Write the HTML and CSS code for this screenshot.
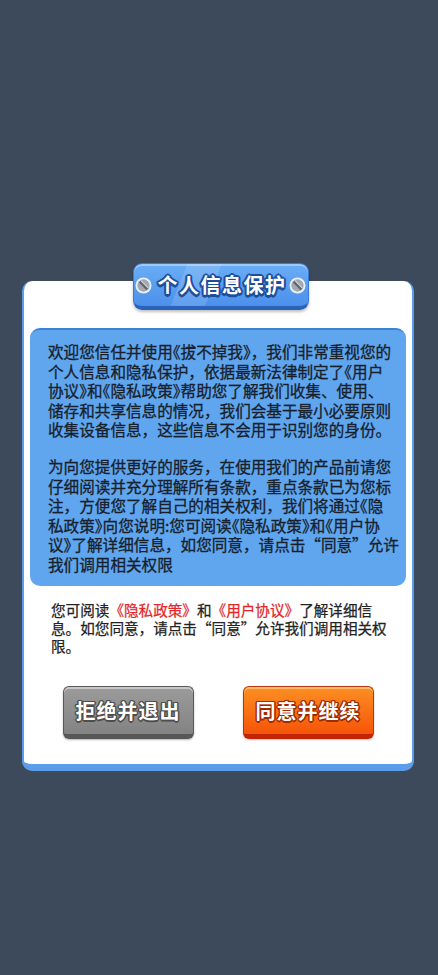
FILE: index.html
```html
<!DOCTYPE html>
<html lang="zh-CN">
<head>
<meta charset="utf-8">
<title>个人信息保护</title>
<link rel="stylesheet" href="styles.css">
</head>
<body>
<div class="page">
  <div class="dialog">
    <div class="tab-row">
      <div class="tab">
        <svg class="screw" width="17" height="17" viewBox="0 0 16 16"><circle cx="8" cy="8" r="7.5" fill="#e9f0fa"/><circle cx="8" cy="8" r="5.8" fill="#a3a9b3"/><path d="M4.4 4.4 L11.6 11.6" stroke="#60656d" stroke-width="2.2"/><path d="M5.6 3.4 L12.4 10.2" stroke="#cfd4dc" stroke-width="1"/></svg>
        <span class="tab-title">个人信息保护</span>
        <svg class="screw" width="17" height="17" viewBox="0 0 16 16"><circle cx="8" cy="8" r="7.5" fill="#e9f0fa"/><circle cx="8" cy="8" r="5.8" fill="#a3a9b3"/><path d="M4.4 4.4 L11.6 11.6" stroke="#60656d" stroke-width="2.2"/><path d="M5.6 3.4 L12.4 10.2" stroke="#cfd4dc" stroke-width="1"/></svg>
      </div>
    </div>
    <div class="card">
      <div class="notice">
        <p>欢迎您信任并使用<span class="q">《</span>拔不掉我<span class="q">》</span>，我们非常重视您的<br>个人信息和隐私保护，依据最新法律制定了<span class="q">《</span>用户<br>协议<span class="q">》</span>和<span class="q">《</span>隐私政策<span class="q">》</span>帮助您了解我们收集、使用、<br>储存和共享信息的情况，我们会基于最小必要原则<br>收集设备信息，这些信息不会用于识别您的身份。</p>
        <p>为向您提供更好的服务，在使用我们的产品前请您<br>仔细阅读并充分理解所有条款，重点条款已为您标<br>注，方便您了解自己的相关权利，我们将通过<span class="q">《</span>隐<br>私政策<span class="q">》</span>向您说明:您可阅读<span class="q">《</span>隐私政策<span class="q">》</span>和<span class="q">《</span>用户协<br>议<span class="q">》</span>了解详细信息，如您同意，请点击“同意”允许<br>我们调用相关权限</p>
      </div>
      <p class="hint">您可阅读<span class="link">《隐私政策》</span>和<span class="link">《用户协议》</span>了解详细信<br>息。如您同意，请点击“同意”允许我们调用相关权<br>限。</p>
      <div class="actions">
        <button class="btn btn-grey">拒绝并退出</button>
        <button class="btn btn-orange">同意并继续</button>
      </div>
    </div>
  </div>
</div>
</body>
</html>
```

FILE: styles.css
```css
html, body {
  margin: 0;
  padding: 0;
}

body {
  background: #3d4a5c;
  font-family: "Noto Sans CJK SC", "Noto Sans", sans-serif;
}

.page {
  min-height: 975px;
  box-sizing: border-box;
  padding-top: 263px;
}

.dialog {
  width: 392px;
  margin-left: 22px;
}

.tab-row {
  display: flex;
  justify-content: center;
  padding-left: 5px;
  margin-bottom: -29px;
  position: relative;
  z-index: 1;
}

.tab {
  width: 176px;
  height: 47px;
  box-sizing: border-box;
  display: flex;
  align-items: center;
  justify-content: space-between;
  padding: 0 2px 0 1px;
  border-radius: 9px;
  border: 1px solid #3b7ad2;
  border-bottom: 4px solid #2a62bb;
  background:
    linear-gradient(112deg, rgba(255,255,255,0) 28%, rgba(255,255,255,0.13) 28%, rgba(255,255,255,0.13) 46%, rgba(255,255,255,0) 46%),
    linear-gradient(180deg, #6aadf6 0%, #4c90ea 100%);
  box-shadow: inset 0 2px 0 rgba(255,255,255,0.35), 0 2px 3px rgba(0,0,0,0.25);
}

.screw {
  display: block;
  flex: none;
}

.tab-title {
  color: #fff;
  font-size: 20px;
  font-weight: 700;
  letter-spacing: 1.5px;
  line-height: 1;
  margin: -1px 0 0 4px;
  text-shadow:
    -2px 0 #1d4e9b, 2px 0 #1d4e9b, 0 -2px #1d4e9b, 0 2px #1d4e9b,
    -1.5px -1.5px #1d4e9b, 1.5px -1.5px #1d4e9b, -1.5px 1.5px #1d4e9b, 1.5px 1.5px #1d4e9b,
    0 3px #1d4e9b;
}

.card {
  background: #fff;
  border: 2px solid #5b9de8;
  border-top: 0;
  border-bottom-width: 7px;
  border-radius: 10px;
  padding: 47px 6px 25px;
}

.notice {
  background: #5fa6ee;
  border-top: 2px solid #3c82d5;
  border-radius: 10px;
  padding: 12px 8px 11px 18px;
  color: #17202b;
  font-size: 15.6px;
  line-height: 19.6px;
  -webkit-text-stroke: 0.3px #17202b;
}

.notice p {
  margin: 0;
  white-space: nowrap;
}

.notice p + p {
  margin-top: 17px;
}

.q {
  font-feature-settings: "halt";
}

.hint {
  margin: 15px 0 0;
  padding: 0 8px 0 21px;
  font-size: 14.6px;
  line-height: 18.3px;
  color: #222;
  white-space: nowrap;
  -webkit-text-stroke: 0.25px #222;
}

.link {
  color: #e3262a;
  -webkit-text-stroke: 0.25px #e3262a;
}

.actions {
  display: flex;
  justify-content: center;
  gap: 49px;
  margin-top: 31px;
}

.btn {
  width: 131px;
  height: 53px;
  box-sizing: border-box;
  padding: 0;
  border-radius: 6px;
  font-family: inherit;
  font-size: 20px;
  font-weight: 700;
  letter-spacing: 1px;
  line-height: 1;
  color: #fff;
  cursor: pointer;
}

.btn-grey {
  background: linear-gradient(180deg, #9b9b9b 0%, #838383 100%);
  border: 1px solid #5a5a5a;
  border-bottom: 5px solid #575757;
  box-shadow: inset 0 2px 0 rgba(255,255,255,0.45), 0 1px 2px rgba(0,0,0,0.3);
  text-shadow:
    -1.5px 0 #4e4e4e, 1.5px 0 #4e4e4e, 0 -1.5px #4e4e4e, 0 1.5px #4e4e4e,
    -1px -1px #4e4e4e, 1px -1px #4e4e4e, -1px 1px #4e4e4e, 1px 1px #4e4e4e;
}

.btn-orange {
  background: linear-gradient(180deg, #fc8f23 0%, #f65408 100%);
  border: 1px solid #b5380b;
  border-bottom: 5px solid #c22406;
  box-shadow: inset 0 2px 0 rgba(255,214,150,0.6), 0 1px 2px rgba(0,0,0,0.25);
  text-shadow:
    -1.5px 0 #a22a00, 1.5px 0 #a22a00, 0 -1.5px #a22a00, 0 1.5px #a22a00,
    -1px -1px #a22a00, 1px -1px #a22a00, -1px 1px #a22a00, 1px 1px #a22a00;
}
```
